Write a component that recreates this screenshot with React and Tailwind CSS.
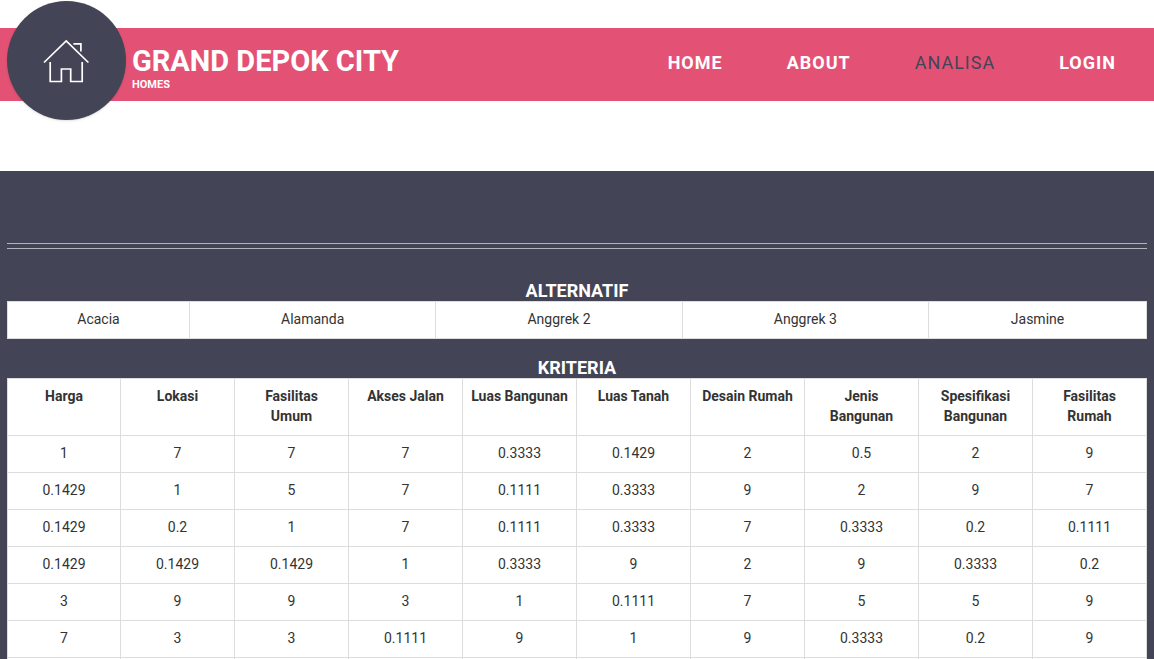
import React from 'react';

const menu = [
  { label: 'HOME', href: '#home' },
  { label: 'ABOUT', href: '#about' },
  { label: 'ANALISA', href: '#analisa', active: true },
  { label: 'LOGIN', href: '#login' },
];

const alternatif = ['Acacia', 'Alamanda', 'Anggrek 2', 'Anggrek 3', 'Jasmine'];

const kriteria = [
  'Harga',
  'Lokasi',
  'Fasilitas Umum',
  'Akses Jalan',
  'Luas Bangunan',
  'Luas Tanah',
  'Desain Rumah',
  'Jenis Bangunan',
  'Spesifikasi Bangunan',
  'Fasilitas Rumah',
];

const matriks = [
  ['1', '7', '7', '7', '0.3333', '0.1429', '2', '0.5', '2', '9'],
  ['0.1429', '1', '5', '7', '0.1111', '0.3333', '9', '2', '9', '7'],
  ['0.1429', '0.2', '1', '7', '0.1111', '0.3333', '7', '0.3333', '0.2', '0.1111'],
  ['0.1429', '0.1429', '0.1429', '1', '0.3333', '9', '2', '9', '0.3333', '0.2'],
  ['3', '9', '9', '3', '1', '0.1111', '7', '5', '5', '9'],
  ['7', '3', '3', '0.1111', '9', '1', '9', '0.3333', '0.2', '9'],
  ['', '', '', '', '', '', '', '', '', ''],
];

const HouseIcon = () => (
  <svg width="48" height="44" viewBox="0 0 48 44" fill="none" stroke="white" strokeWidth="1.7" aria-hidden="true">
    <path d="M1 23.5 23.2 2l22.2 21.5" />
    <path d="M30.4 4.8h7.5V12.5" />
    <path d="M7.2 23v19.5h11.2V30h9.3v12.5H39.2V23" />
  </svg>
);

const Header = () => (
  <header className="pt-7 pb-[70px]">
    <div className="flex h-[73px] items-start bg-[#e35275] px-[7px]">
      <a
        href="#home"
        aria-label="Grand Depok City"
        className="-mt-[27px] flex size-[119px] shrink-0 items-center justify-center rounded-full bg-[#444457] shadow-sm"
      >
        <HouseIcon />
      </a>
      <div className="ml-[6px] flex flex-col pt-[17px] font-bold text-white">
        <h1 className="text-[29px] leading-8">GRAND DEPOK CITY</h1>
        <span className="text-[11px] leading-4">HOMES</span>
      </div>
      <nav className="ml-auto mr-[31px] flex gap-16 pt-[23px]">
        {menu.map((item) => (
          <a
            key={item.label}
            href={item.href}
            className={`text-lg leading-6 tracking-[1px] ${item.active ? 'font-normal text-[#444457]' : 'font-bold text-white'}`}
          >
            {item.label}
          </a>
        ))}
      </nav>
    </div>
  </header>
);

const cell = 'border border-[#dddddd] px-2 pt-[7px] pb-[9px] align-top';

const App = () => {
  return (
    <div className="flex h-screen flex-col overflow-hidden bg-white font-['Roboto',sans-serif]">
      <Header />

      <main className="flex-1 bg-[#444457] px-[7px] pt-[72px]">
        <hr className="mb-8 h-[6px] border-y border-[#b4b4bc]" />

        <h2 className="text-center text-lg leading-5 font-bold text-white">ALTERNATIF</h2>
        <table className="mb-[19px] w-full table-fixed border-collapse bg-white text-center text-sm leading-5 text-[#333333]">
          <colgroup>
            <col className="w-[182px]" />
            <col />
            <col />
            <col />
            <col className="w-[218px]" />
          </colgroup>
          <tbody>
            <tr>
              {alternatif.map((nama) => (
                <td key={nama} className={cell}>{nama}</td>
              ))}
            </tr>
          </tbody>
        </table>

        <h2 className="text-center text-lg leading-5 font-bold text-white">KRITERIA</h2>
        <table className="w-full table-fixed border-collapse bg-white text-center text-sm leading-5 text-[#333333]">
          <colgroup>
            <col className="w-[113px]" />
            <col span={9} />
          </colgroup>
          <thead>
            <tr>
              {kriteria.map((nama) => (
                <th key={nama} scope="col" className={`${cell} font-bold`}>{nama}</th>
              ))}
            </tr>
          </thead>
          <tbody>
            {matriks.map((baris, i) => (
              <tr key={i} className="h-[37px]">
                {baris.map((nilai, j) => (
                  <td key={j} className={cell}>{nilai}</td>
                ))}
              </tr>
            ))}
          </tbody>
        </table>
      </main>
    </div>
  );
};

export default App;
